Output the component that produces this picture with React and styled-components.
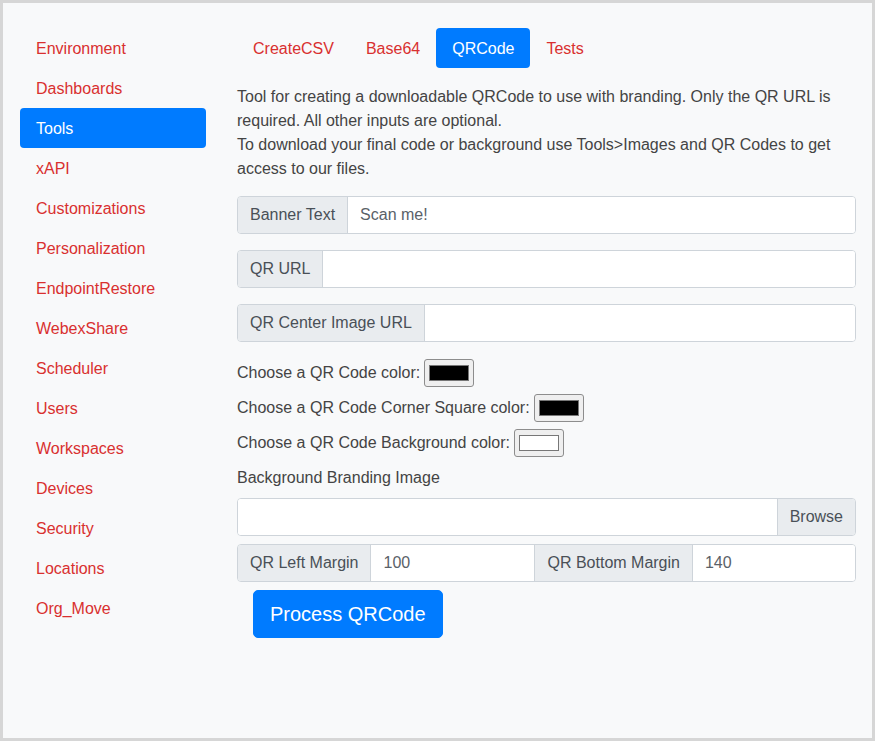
import React from "react";
import styled, { createGlobalStyle } from "styled-components";

const Global = createGlobalStyle`
  html, body { margin: 0; padding: 0; }
  body { font-family: "Liberation Sans", Arial, sans-serif; font-size: 16px; line-height: 24px; color: #212529; background: #d4d4d4; }
  * { box-sizing: border-box; }
`;

const Frame = styled.div`
  width: 875px;
  height: 741px;
  border: 3px solid #d6d6d6;
  background: #f8f9fa;
  display: flex;
  gap: 31px;
  padding: 25px 16px 0 17px;
`;

const Sidebar = styled.nav`
  width: 186px;
  flex: none;
  display: flex;
  flex-direction: column;
`;

const NavLink = styled.a`
  display: block;
  height: 40px;
  padding: 9px 16px 7px;
  border-radius: 4px;
  color: ${(p) => (p.$active ? "#fff" : "#d9302f")};
  background: ${(p) => (p.$active ? "#007bff" : "transparent")};
  text-decoration: none;
  font-size: 16px;
  line-height: 24px;
`;

const Main = styled.main`
  flex: 1;
  min-width: 0;
  display: flex;
  flex-direction: column;
`;

const Tabs = styled.div`
  display: flex;
  margin-bottom: 17px;
`;

const Intro = styled.p`
  margin: 0 0 15px;
  color: #444;
  font-size: 16px;
  line-height: 24px;
`;

const InputGroup = styled.div`
  display: flex;
  height: 38px;
  margin-bottom: ${(p) => p.$mb ?? 16}px;
  border: 1px solid #ced4da;
  border-radius: 4px;
  overflow: hidden;
  background: #fff;
`;

const Addon = styled.span`
  flex: none;
  display: flex;
  align-items: center;
  padding: 0 12px;
  background: #e9ecef;
  color: #495057;
  font-size: 16px;
  border-left: ${(p) => (p.$divider ? "1px solid #ced4da" : "none")};
  border-right: ${(p) => (p.$right ? "none" : "1px solid #ced4da")};
`;

const Field = styled.div`
  flex: ${(p) => (p.$w ? "none" : "1")};
  width: ${(p) => (p.$w ? p.$w + "px" : "auto")};
  display: flex;
  align-items: center;
  padding: 0 12px;
  color: #5a6168;
  font-size: 16px;
  background: #fff;
`;

const ColorGroup = styled.div`
  display: flex;
  flex-direction: column;
  gap: 7px;
  margin: 17px 0 8px;
`;

const ColorRow = styled.div`
  display: flex;
  align-items: center;
  height: 28px;
  color: #444;
  font-size: 16px;
`;

const Swatch = styled.span`
  display: inline-flex;
  margin-left: 4px;
  width: 50px;
  height: 28px;
  padding: 5px 4px;
  border: 1px solid #8d8d8d;
  border-radius: 3px;
  background: #efefef;
  & > span {
    flex: 1;
    border: 1px solid #777;
    background: ${(p) => p.$color};
  }
`;

const Label = styled.div`
  margin: 1px 0 8px;
  color: #444;
  font-size: 16px;
  line-height: 24px;
`;

const ButtonRow = styled.div`
  padding: 0 16px;
`;

const Button = styled.button`
  font-family: inherit;
  font-size: 20px;
  line-height: 30px;
  padding: 8px 16px;
  color: #fff;
  background: #007bff;
  border: 1px solid #007bff;
  border-radius: 5px;
  cursor: pointer;
`;

const navItems = [
  "Environment", "Dashboards", "Tools", "xAPI", "Customizations", "Personalization",
  "EndpointRestore", "WebexShare", "Scheduler", "Users", "Workspaces", "Devices",
  "Security", "Locations", "Org_Move",
];
const tabs = ["CreateCSV", "Base64", "QRCode", "Tests"];
const colors = [
  ["Choose a QR Code color:", "#000"],
  ["Choose a QR Code Corner Square color:", "#000"],
  ["Choose a QR Code Background color:", "#fff"],
];

export default function App() {
  return (
    <>
      <Global />
      <Frame>
        <Sidebar>
          {navItems.map((n) => (
            <NavLink key={n} $active={n === "Tools"}>{n}</NavLink>
          ))}
        </Sidebar>
        <Main>
          <Tabs>
            {tabs.map((t) => (
              <NavLink key={t} $active={t === "QRCode"}>{t}</NavLink>
            ))}
          </Tabs>
          <Intro>
            Tool for creating a downloadable QRCode to use with branding. Only the QR URL is required. All other inputs are optional.
            <br />
            To download your final code or background use Tools&gt;Images and QR Codes to get access to our files.
          </Intro>
          <InputGroup>
            <Addon>Banner Text</Addon>
            <Field>Scan me!</Field>
          </InputGroup>
          <InputGroup>
            <Addon>QR URL</Addon>
            <Field />
          </InputGroup>
          <InputGroup $mb={0}>
            <Addon>QR Center Image URL</Addon>
            <Field />
          </InputGroup>
          <ColorGroup>
            {colors.map(([label, c]) => (
              <ColorRow key={label}>
                {label} <Swatch $color={c}><span /></Swatch>
              </ColorRow>
            ))}
          </ColorGroup>
          <Label>Background Branding Image</Label>
          <InputGroup $mb={8}>
            <Field />
            <Addon $right $divider>Browse</Addon>
          </InputGroup>
          <InputGroup $mb={8}>
            <Addon>QR Left Margin</Addon>
            <Field $w={163}>100</Field>
            <Addon $divider>QR Bottom Margin</Addon>
            <Field>140</Field>
          </InputGroup>
          <ButtonRow>
            <Button>Process QRCode</Button>
          </ButtonRow>
        </Main>
      </Frame>
    </>
  );
}
